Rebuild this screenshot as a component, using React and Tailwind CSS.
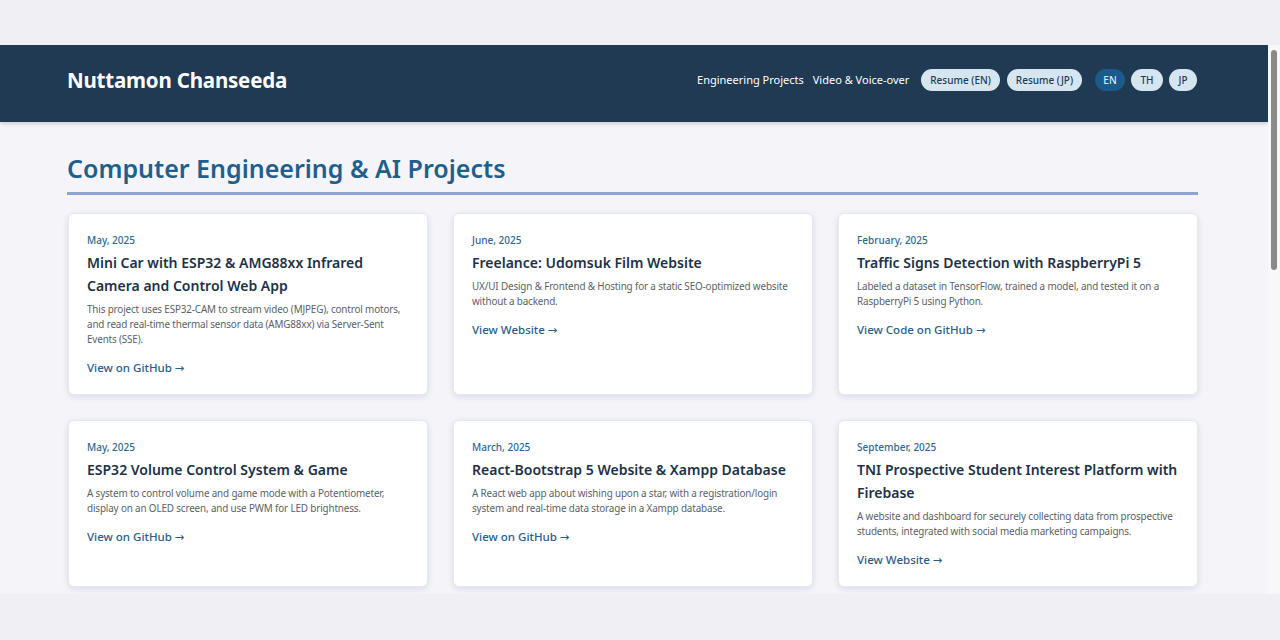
const projects = [
  {
    date: 'May, 2025',
    title: 'Mini Car with ESP32 & AMG88xx Infrared Camera and Control Web App',
    desc: 'This project uses ESP32-CAM to stream video (MJPEG), control motors, and read real-time thermal sensor data (AMG88xx) via Server-Sent Events (SSE).',
    link: 'View on GitHub',
  },
  {
    date: 'June, 2025',
    title: 'Freelance: Udomsuk Film Website',
    desc: 'UX/UI Design & Frontend & Hosting for a static SEO-optimized website without a backend.',
    link: 'View Website',
  },
  {
    date: 'February, 2025',
    title: 'Traffic Signs Detection with RaspberryPi 5',
    desc: 'Labeled a dataset in TensorFlow, trained a model, and tested it on a RaspberryPi 5 using Python.',
    link: 'View Code on GitHub',
  },
  {
    date: 'May, 2025',
    title: 'ESP32 Volume Control System & Game',
    desc: 'A system to control volume and game mode with a Potentiometer, display on an OLED screen, and use PWM for LED brightness.',
    link: 'View on GitHub',
  },
  {
    date: 'March, 2025',
    title: 'React-Bootstrap 5 Website & Xampp Database',
    desc: 'A React web app about wishing upon a star, with a registration/login system and real-time data storage in a Xampp database.',
    link: 'View on GitHub',
  },
  {
    date: 'September, 2025',
    title: 'TNI Prospective Student Interest Platform with Firebase',
    desc: 'A website and dashboard for securely collecting data from prospective students, integrated with social media marketing campaigns.',
    link: 'View Website',
  },
];

function ProjectCard({ p }) {
  return (
    <div className="bg-white rounded-md border border-[#e3e9f0] shadow-[0_2px_6px_rgba(30,50,80,0.12)] px-[18px] pt-5 pb-[18px]">
      <p className="text-[10px] leading-[13px] font-medium text-[#2f6893]">{p.date}</p>
      <h3 className="mt-1 text-[14px] leading-[23px] font-semibold text-[#1d3247]">{p.title}</h3>
      <p className="mt-[5px] text-[9.9px] leading-[15px] tracking-[-0.15px] text-[#5b5f66]">{p.desc}</p>
      <a href="#" className="block mt-[13px] text-[11.5px] leading-4 font-medium text-[#2a5e89] no-underline">
        {p.link} <span className="font-['DejaVu_Sans'] font-normal">&rarr;</span>
      </a>
    </div>
  );
}

export default function App() {
  return (
    <div className="w-[1280px] h-[640px] bg-[#efeff4] overflow-hidden" style={{ fontFamily: '"Noto Sans", "Open Sans", sans-serif' }}>
      <div className="h-[45px]" />
      <div className="flex h-[549px]">
        <div className="w-[1268px] h-full bg-[#f4f4f9] overflow-hidden">
          <header className="h-[77px] bg-[#1f3a52] shadow-[0_2px_4px_rgba(0,0,0,0.15)] flex items-center justify-between pl-[67px] pr-[71px] pb-[7px]">
            <span className="text-white font-bold text-[20.5px] tracking-[-0.2px]">Nuttamon Chanseeda</span>
            <nav className="flex items-center text-[11px]">
              <a href="#" className="text-white no-underline">Engineering Projects</a>
              <a href="#" className="ml-[9px] text-white no-underline">Video &amp; Voice-over</a>
              <button className="ml-3 h-[22px] px-[9px] rounded-full bg-[#d5e6f1] text-[#1f3a52] text-[10px] font-medium">Resume (EN)</button>
              <button className="ml-[7px] h-[22px] px-[9px] rounded-full bg-[#d5e6f1] text-[#1f3a52] text-[10px] font-medium">Resume (JP)</button>
              <button className="ml-[13px] h-[22px] w-[30px] rounded-full bg-[#1b5b8a] text-[#dce9f3] text-[10px] font-medium">EN</button>
              <button className="ml-[6px] h-[22px] w-[32px] rounded-full bg-[#d5e6f1] text-[#1f3a52] text-[10px] font-medium">TH</button>
              <button className="ml-[6px] h-[22px] w-[28px] rounded-full bg-[#d5e6f1] text-[#1f3a52] text-[10px] font-medium">JP</button>
            </nav>
          </header>

          <main className="ml-[67px] w-[1131px] pt-[28px]">
            <h1 className="text-[25px] leading-[36px] font-semibold text-[#1f5f8b] pb-[6px] border-b-[3px] border-[#8fa2d3]">
              Computer Engineering &amp; AI Projects
            </h1>
            <div className="grid grid-cols-3 gap-x-[25px] gap-y-[25px] mt-[18px] pl-px">
              {projects.map((p, i) => (
                <ProjectCard key={i} p={p} />
              ))}
            </div>
          </main>
        </div>
        <div className="w-[12px] h-full bg-[#f8f8f8] flex justify-center pt-[5px]">
          <div className="w-[6px] h-[220px] rounded-full bg-[#8a8a8a]" />
        </div>
      </div>
    </div>
  );
}
